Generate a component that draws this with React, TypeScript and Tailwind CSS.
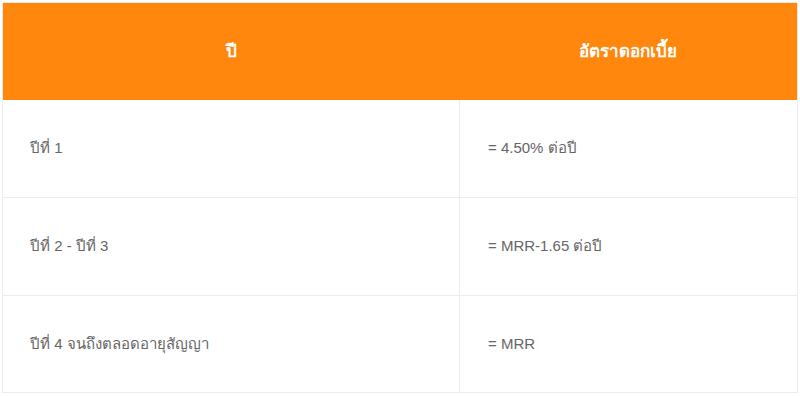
import React from 'react'

const rows = [
  { year: 'ปีที่ 1', rate: '= 4.50% ต่อปี', h: 'h-[97px]' },
  { year: 'ปีที่ 2 - ปีที่ 3', rate: '= MRR-1.65 ต่อปี', h: 'h-[98px]' },
  { year: 'ปีที่ 4 จนถึงตลอดอายุสัญญา', rate: '= MRR', h: 'h-[97px]' },
]

const App = () => {
  return (
    <div className="w-[800px] h-[396px] bg-white p-[2px] font-['Liberation_Sans',Arial,sans-serif]">
      <div className="w-[796px] border border-[#ececec]">
        <div className="grid grid-cols-[456px_1fr] h-[97px] bg-[#ff870d] text-white font-bold text-[17px]">
          <div className="flex items-center justify-center">ปี</div>
          <div className="flex items-center justify-center">อัตราดอกเบี้ย</div>
        </div>
        {rows.map((r, i) => (
          <div
            key={i}
            className={`grid grid-cols-[456px_1fr] ${r.h} text-[15px] text-[#666666] ${i > 0 ? 'border-t border-[#ececec]' : ''}`}
          >
            <div className="flex items-center pl-[27px]">{r.year}</div>
            <div className="flex items-center pl-[28px] border-l border-[#ececec]">{r.rate}</div>
          </div>
        ))}
      </div>
    </div>
  )
}

export default App
